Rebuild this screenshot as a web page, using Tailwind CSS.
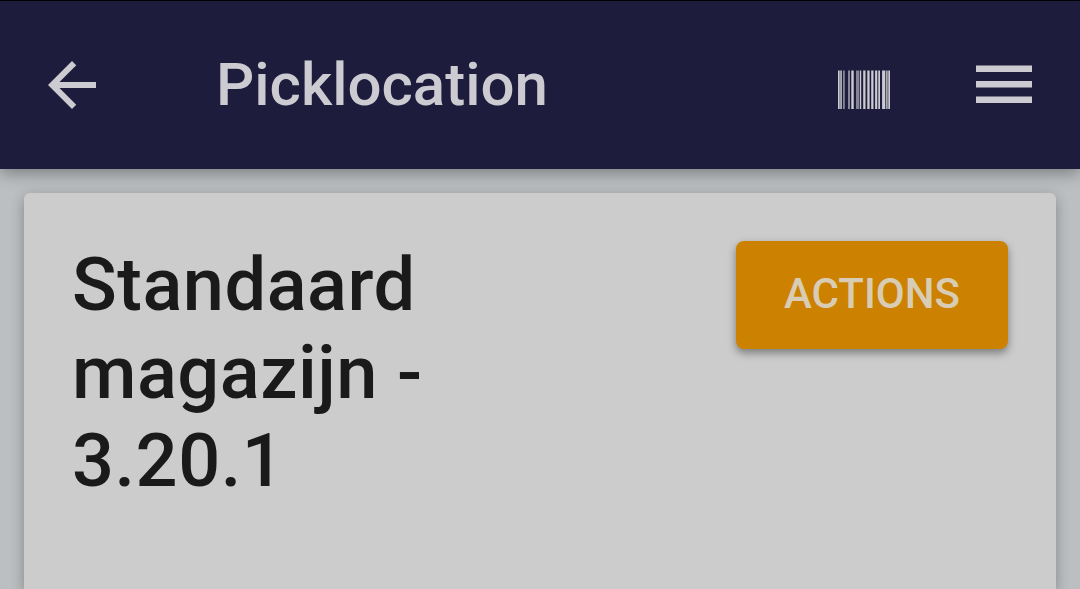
<!DOCTYPE html>
<html lang="nl">
<head>
    <meta charset="UTF-8">
    <meta name="viewport" content="width=device-width, initial-scale=1.0">
    <title>Picklocation</title>
    <script src="https://cdn.jsdelivr.net/npm/@tailwindcss/browser@4"></script>
</head>
<body class="bg-[#bbbfc1] font-[Roboto,sans-serif] h-screen overflow-hidden flex flex-col">
    <!-- Top bar -->
    <header class="relative z-10 h-[169px] shrink-0 bg-[#1e1c3c] border-t border-black text-[#cccbd1] flex items-center pl-9 pr-12 shadow-[0_4px_16px_rgba(0,0,0,0.35)]">
        <button aria-label="Back">
            <svg class="size-[72px]" viewBox="0 0 24 24" fill="currentColor"><path d="M20 11H7.83l5.59-5.59L12 4l-8 8 8 8 1.41-1.41L7.83 13H20v-2z"/></svg>
        </button>
        <h1 class="ml-27 text-[60px] leading-none font-medium">Picklocation</h1>
        <!-- Barcode scanner -->
        <button class="ml-auto mt-2" aria-label="Scan">
            <svg class="w-[52px] h-[39px]" viewBox="0 0 52 39" fill="currentColor">
                <path d="M0 .5h1.7V39H0zM2.3.5h1.5V39H2.3zM13.3.5h2.4V39h-2.4zM22 .5h1.2V39H22zM25.2.5h2.3V39h-2.3zM29.3.5h2.3V39h-2.3zM33.2.5h2.3V39h-2.3zM37.1.5h2.2V39h-2.2zM40.3.5H42V39h-1.7zM44.1.5h3.2V39h-3.2zM48.2.5h1.4V39h-1.4zM50.3.5H52V39h-1.7z"/>
                <path fill-opacity=".6" d="M5 .5h1.8V39H5zM10 .5h2V39h-2zM18 .5h3.4V39H18z"/>
            </svg>
        </button>
        <button class="ml-[86px] mb-0.5" aria-label="Menu">
            <svg class="w-14 h-[38px]" viewBox="0 0 56 38" fill="currentColor"><path d="M0 .5h56V7H0zM0 16h56v6.5H0zM0 31.5h56V38H0z"/></svg>
        </button>
    </header>

    <!-- Location card -->
    <main class="flex-1 min-h-0 px-6 pt-6">
        <section class="h-full bg-[#cccccc] rounded-t-md p-12 flex justify-between items-start shadow-[0_4px_14px_rgba(0,0,0,0.3)]">
            <h2 class="w-[400px] text-[74px] leading-[88px] tracking-[0.5px] font-medium text-[#1a1a1a]">Standaard magazijn - 3.20.1</h2>
            <button class="w-[272px] h-[108px] pb-1 bg-[#cc8200] text-[#d8ccb4] text-[42px] font-medium rounded-lg shadow-[0_4px_8px_rgba(0,0,0,0.4)]">ACTIONS</button>
        </section>
    </main>
</body>
</html>
